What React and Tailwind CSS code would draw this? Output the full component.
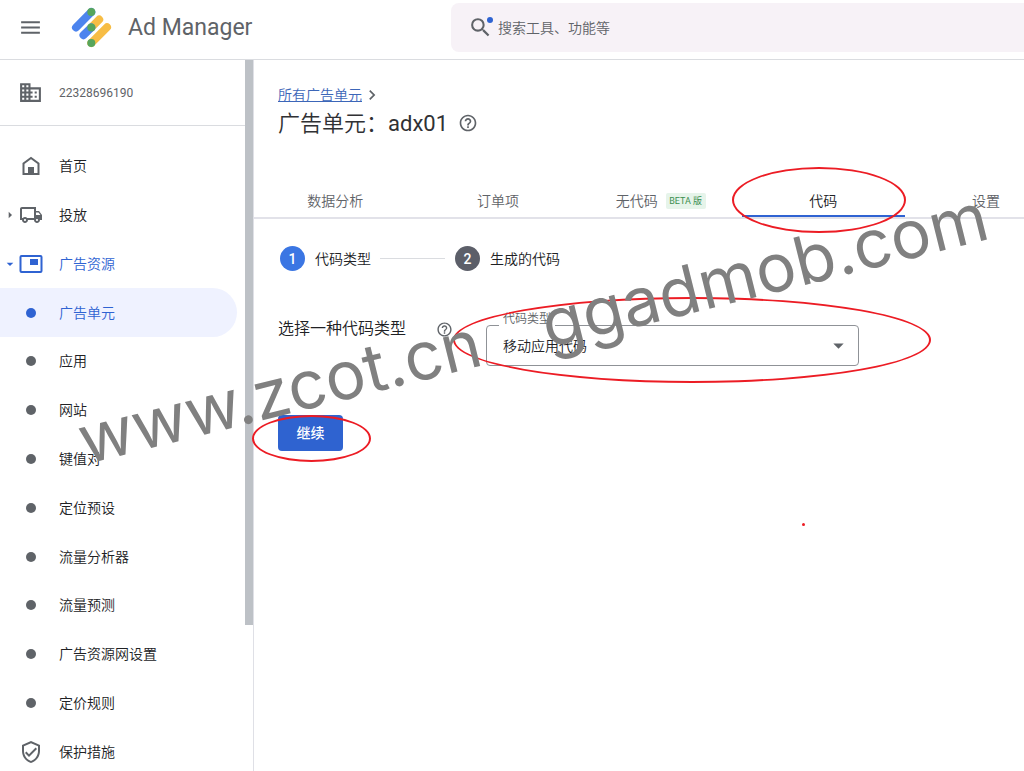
import React from 'react';
import {
  MdArrowDropDown,
  MdArrowRight,
  MdChevronRight,
  MdDomain,
  MdHelpOutline,
  MdMenu,
  MdOutlineLocalShipping,
  MdOutlineVerifiedUser,
  MdSearch,
} from 'react-icons/md';

const HomeIcon = () => (
  <svg viewBox="0 0 24 24" className="h-6 w-6" fill="none" stroke="currentColor" strokeWidth="2">
    <path d="M4.5 20V9.5L12 4l7.5 5.5V20z" />
    <path d="M9 13h6v7H9z" fill="currentColor" stroke="none" />
  </svg>
);

const InventoryIcon = () => (
  <svg viewBox="0 0 24 24" className="h-6 w-6" fill="none" stroke="currentColor" strokeWidth="2">
    <rect x="1.5" y="4" width="21" height="16" rx="1" />
    <path d="M11 7h8v6h-8z" fill="currentColor" stroke="none" />
  </svg>
);

const Logo = () => (
  <svg viewBox="0 0 41 41" className="h-[41px] w-[41px]" fill="none" strokeWidth="8" strokeLinecap="round">
    <path d="M5 20.5 20.3 5" stroke="#4c84ee" />
    <path d="M20.3 20.5 28.2 12.5" stroke="#f7bd45" />
    <path d="M12.5 28.2 20.3 20.5" stroke="#4c84ee" />
    <path d="M36 20.2 20.3 36" stroke="#f7bd45" />
    <g fill="#57a55c">
      <circle cx="20.3" cy="5" r="4" />
      <circle cx="20.3" cy="20.5" r="4" />
      <circle cx="20.3" cy="36" r="4" />
    </g>
  </svg>
);

const navItems = [
  { label: '首页', icon: <HomeIcon /> },
  { label: '投放', icon: <MdOutlineLocalShipping size={24} />, arrow: <MdArrowRight size={16} /> },
  { label: '广告资源', icon: <InventoryIcon />, arrow: <MdArrowDropDown size={16} />, open: true },
  { label: '广告单元', active: true },
  { label: '应用' },
  { label: '网站' },
  { label: '键值对' },
  { label: '定位预设' },
  { label: '流量分析器' },
  { label: '流量预测' },
  { label: '广告资源网设置' },
  { label: '定价规则' },
  { label: '保护措施', icon: <MdOutlineVerifiedUser size={24} /> },
];

const tabs = [
  { label: '数据分析' },
  { label: '订单项' },
  { label: '无代码', beta: true },
  { label: '代码', active: true },
  { label: '设置' },
];

const Header = () => (
  <header className="flex h-[60px] shrink-0 items-center border-b border-[#dadce0] pb-1">
    <div className="flex w-[451px] shrink-0 items-center pl-[18px] text-[#5f6368]">
      <button type="button" aria-label="菜单">
        <MdMenu size={25} />
      </button>
      <a href="#" className="ml-7 flex items-center gap-4">
        <Logo />
        <span className="text-[23px] leading-7 font-normal">Ad Manager</span>
      </a>
    </div>
    <div className="flex h-[49px] flex-1 items-center rounded-l-lg bg-[#f7f2f7] pl-[17px] text-[#5f6368]">
      <span className="relative">
        <MdSearch size={25} />
        <span className="absolute top-[2px] right-0 h-[6px] w-[6px] rounded-full bg-[#2f63d2]" />
      </span>
      <input
        type="search"
        aria-label="搜索"
        placeholder="搜索工具、功能等"
        className="ml-[5px] flex-1 bg-transparent text-sm outline-none placeholder:text-[#5f6368]"
      />
    </div>
  </header>
);

const NavItem = ({ label, icon, arrow, open, active }) => (
  <li className="flex flex-1">
    <a
      href="#"
      className={`mr-2 flex flex-1 items-center rounded-r-full text-sm ${
        active ? 'bg-[#eff2ff] text-[#2f63d2]' : open ? 'text-[#2f63d2]' : 'text-[#202124]'
      }`}
    >
      <span className={`flex w-[18px] justify-end ${open ? '' : 'text-[#5f6368]'}`}>{arrow}</span>
      <span className={`flex w-[25px] justify-center ${open || active ? '' : 'text-[#5f6368]'}`}>
        {icon || <span className="h-[10px] w-[10px] rounded-full bg-current" />}
      </span>
      <span className="ml-4">{label}</span>
    </a>
  </li>
);

const Sidebar = () => (
  <aside className="flex w-[254px] shrink-0 overflow-hidden border-r border-[#dfe0e6]">
    <div className="flex flex-1 flex-col">
      <div className="flex h-[66px] shrink-0 items-center border-b border-[#dadce0] pl-[18px] text-[#5f6368]">
        <MdDomain size={25} />
        <span className="ml-4 text-xs font-normal">22328696190</span>
      </div>
      <nav className="mt-4">
        <ul className="flex h-[634px] flex-col">
          {navItems.map((item) => (
            <NavItem key={item.label} {...item} />
          ))}
        </ul>
      </nav>
    </div>
    <div className="h-[565px] w-2 bg-[#bdc1c6]" />
  </aside>
);

const Tabs = () => (
  <div role="tablist" className="mt-12 border-b-2 border-[#e2e2e9]">
    <div className="grid w-[976px] grid-cols-6">
      {tabs.map(({ label, beta, active }) => (
        <button
          key={label}
          type="button"
          role="tab"
          aria-selected={!!active}
          className={`flex h-[30px] items-center justify-center gap-2 border-b-2 text-sm ${
            active ? 'border-[#2f63d2] text-[#202124]' : 'border-transparent text-[#5f6368]'
          }`}
        >
          {label}
          {beta && (
            <span className="flex h-4 w-10 items-center justify-center rounded-xs bg-[#e6f4ea] text-[9px] font-normal text-[#3c8f50]">
              BETA 版
            </span>
          )}
        </button>
      ))}
    </div>
  </div>
);

const Step = ({ number, label, active }) => (
  <li className="flex items-center gap-[10px] text-sm text-[#202124]">
    <span
      className={`flex h-[25px] w-[25px] items-center justify-center rounded-full font-medium text-white ${
        active ? 'bg-[#3b76e3]' : 'bg-[#5c5f69]'
      }`}
    >
      {number}
    </span>
    {label}
  </li>
);

const CodeForm = () => (
  <form className="pl-6" onSubmit={(e) => e.preventDefault()}>
    <div className="mt-[46px] flex items-start">
      <div className="flex h-6 w-[208px] shrink-0 items-center text-base text-[#202124]">
        选择一种代码类型
        <MdHelpOutline size={17} className="ml-[30px] text-[#5f6368]" />
      </div>
      <div className="relative mt-2 w-full max-w-[373px]">
        <label
          htmlFor="code-type"
          className="absolute -top-[14px] left-[13px] bg-white px-1 text-xs leading-4 text-[#5f6368]"
        >
          代码类型
        </label>
        <select
          id="code-type"
          className="h-[41px] w-full appearance-none rounded-sm border border-[#8f9297] bg-transparent px-4 text-sm text-[#202124]"
        >
          <option>移动应用代码</option>
        </select>
        <MdArrowDropDown size={25} className="pointer-events-none absolute top-2 right-2 text-[#5f6368]" />
      </div>
    </div>
    <button
      type="submit"
      className="mt-[49px] flex h-9 w-[65px] items-center justify-center rounded-sm bg-[#2f63d0] text-sm font-medium text-white"
    >
      继续
    </button>
  </form>
);

// Hand-drawn marks and the site watermark float over the whole page
const Annotations = () => (
  <div className="pointer-events-none absolute inset-0 overflow-hidden">
    <div className="absolute top-[167px] left-[732px] h-[66px] w-[174px] rounded-[50%] border-2 border-[#ec1c24]" />
    <div className="absolute top-[297px] left-[453px] h-[86px] w-[478px] rounded-[50%] border-2 border-[#ec1c24]" />
    <div className="absolute top-[415px] left-[252px] h-[47px] w-[119px] rounded-[50%] border-2 border-[#ec1c24]" />
    <div className="absolute top-[523px] left-[802px] h-[3px] w-[3px] rounded-full bg-[#ec1c24]" />
    <div className="absolute top-[400px] left-[89px] flex h-[80px] origin-bottom-left -rotate-14 items-center gap-[65px] font-[Inter,sans-serif] text-[67px] leading-[80px] font-normal whitespace-nowrap text-[#808080]">
      <span>www.zcot.cn</span>
      <span>ggadmob.com</span>
    </div>
  </div>
);

const App = () => {
  return (
    <div className="relative flex h-screen flex-col overflow-hidden bg-white font-[Roboto,'Noto_Sans_CJK_SC',sans-serif] font-[350]">
      <Header />
      <div className="flex min-h-0 flex-1">
        <Sidebar />
        <main className="min-w-0 flex-1 overflow-hidden pt-[25px]">
          <div className="flex h-5 items-center pl-6 text-sm">
            <a href="#" className="text-[#3c66b8] underline">
              所有广告单元
            </a>
            <MdChevronRight size={20} className="text-[#5f6368]" />
          </div>
          <h1 className="mt-[2px] flex h-8 items-center pl-6 text-[22px] text-[#303134]">
            广告单元：
            <span className="font-normal">adx01</span>
            <MdHelpOutline size={20} className="ml-[10px] text-[#5f6368]" />
          </h1>
          <Tabs />
          <ol className="mt-[27px] flex items-center pl-[26px]">
            <Step number={1} label="代码类型" active />
            <li aria-hidden="true" className="mr-[10px] ml-[9px] h-px w-[65px] bg-[#dadce0]" />
            <Step number={2} label="生成的代码" />
          </ol>
          <CodeForm />
        </main>
      </div>
      <Annotations />
    </div>
  );
};

export default App;
